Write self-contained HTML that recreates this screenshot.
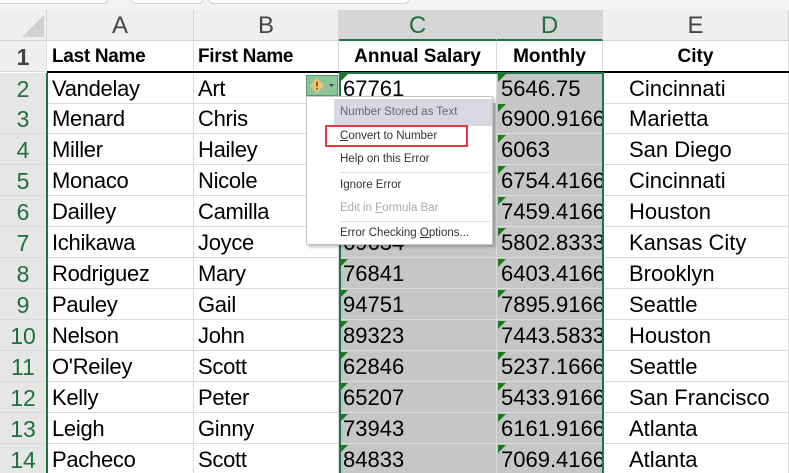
<!DOCTYPE html>
<html><head><meta charset="utf-8"><style>
*{margin:0;padding:0;box-sizing:border-box}
html,body{width:789px;height:473px;overflow:hidden}
body{background:#fff;position:relative;font-family:"Liberation Sans",sans-serif}
.top{position:absolute;left:0;top:0;width:789px;height:10px;background:#f3f3f3}
.tab{position:absolute;top:-6px;height:10px;border:1px solid #d0d0d0;border-radius:4px;background:#fff}
.hdr{position:absolute;top:10px;height:31px;background:#efefef;border-right:1px solid #d4d4d4;border-bottom:1px solid #d4d4d4;font-size:24px;color:#444;text-align:center;line-height:31px}
.hdr.sel{background:#d6d6d6;color:#1e6e3e;border-bottom:2px solid #217346}
.r{position:absolute;left:0;width:789px;height:31px}
.r div{position:absolute;top:0;height:31px;line-height:32px;font-size:22px;white-space:nowrap;overflow:hidden;border-right:1px solid #dadada;border-bottom:1px solid #dadada;color:#000}
.n{left:0;width:47px;background:#e6e6e6;text-align:center;color:#1e6e3e!important;font-size:23px!important}
.a{left:47px;width:147px;padding-left:5px;letter-spacing:-0.3px}
.b{left:194px;width:145px;padding-left:4px;letter-spacing:-0.3px}
.c{left:339px;width:158px;padding-left:4px;background:#c6c6c6}
.d{left:497px;width:106px;padding-left:4px;background:#c6c6c6}
.e{left:603px;width:186px;padding-left:26px}
.c::before,.d::before{content:"";position:absolute;left:1px;top:1px;border-top:8px solid #1a7a1a;border-right:8px solid transparent}
.h .c::before,.h .d::before{display:none}
.h div{font-weight:bold;font-size:19px}
.menu{position:absolute;left:306px;top:96px;width:187px;height:149px;background:#fff;border:1px solid #c6c6c6;box-shadow:2px 2px 3px rgba(0,0,0,.25);font-size:11.5px;color:#333}
.mi{position:absolute;left:33px;height:22px;line-height:22px}
.sep{position:absolute;left:33px;width:150px;height:1px;background:#e0e0e0}
</style></head><body>
<div class="top"><div class="tab" style="left:-10px;width:118px"></div><div class="tab" style="left:131px;width:72px"></div><div class="tab" style="left:209px;width:200px"></div></div>
<div class="hdr" style="left:0;width:47px"><svg width="47" height="31" style="position:absolute;left:0;top:0"><polygon points="22,27 44,27 44,5" fill="#d0d0d0"/></svg></div>
<div class="hdr" style="left:47px;width:147px">A</div>
<div class="hdr" style="left:194px;width:145px">B</div>
<div class="hdr sel" style="left:339px;width:158px">C</div>
<div class="hdr sel" style="left:497px;width:106px">D</div>
<div class="hdr" style="left:603px;width:186px">E</div>

<div class="r h" style="top:41px"><div class="n" style="background:#efefef;color:#444!important">1</div><div class="a">Last Name</div><div class="b">First Name</div><div class="c" style="background:#fff;text-align:center;padding:0">Annual Salary</div><div class="d" style="background:#fff;text-align:center;padding:0">Monthly</div><div class="e" style="text-align:center;padding:0">City</div></div>
<div style="position:absolute;left:47px;top:71px;width:742px;height:2px;background:#000"></div>

<div class="r" style="top:73px"><div class="n">2</div><div class="a">Vandelay</div><div class="b">Art</div><div class="c" style="background:#fff">67761</div><div class="d">5646.75</div><div class="e">Cincinnati</div></div>
<div class="r" style="top:103px"><div class="n">3</div><div class="a">Menard</div><div class="b">Chris</div><div class="c">75410</div><div class="d">6900.91667</div><div class="e">Marietta</div></div>
<div class="r" style="top:134px"><div class="n">4</div><div class="a">Miller</div><div class="b">Hailey</div><div class="c">72756</div><div class="d">6063</div><div class="e">San Diego</div></div>
<div class="r" style="top:165px"><div class="n">5</div><div class="a">Monaco</div><div class="b">Nicole</div><div class="c">81053</div><div class="d">6754.41667</div><div class="e">Cincinnati</div></div>
<div class="r" style="top:196px"><div class="n">6</div><div class="a">Dailley</div><div class="b">Camilla</div><div class="c">89513</div><div class="d">7459.41667</div><div class="e">Houston</div></div>
<div class="r" style="top:227px"><div class="n">7</div><div class="a">Ichikawa</div><div class="b">Joyce</div><div class="c">69634</div><div class="d">5802.83333</div><div class="e">Kansas City</div></div>
<div class="r" style="top:258px"><div class="n">8</div><div class="a">Rodriguez</div><div class="b">Mary</div><div class="c">76841</div><div class="d">6403.41667</div><div class="e">Brooklyn</div></div>
<div class="r" style="top:289px"><div class="n">9</div><div class="a">Pauley</div><div class="b">Gail</div><div class="c">94751</div><div class="d">7895.91667</div><div class="e">Seattle</div></div>
<div class="r" style="top:320px"><div class="n">10</div><div class="a">Nelson</div><div class="b">John</div><div class="c">89323</div><div class="d">7443.58333</div><div class="e">Houston</div></div>
<div class="r" style="top:351px"><div class="n">11</div><div class="a">O'Reiley</div><div class="b">Scott</div><div class="c">62846</div><div class="d">5237.16667</div><div class="e">Seattle</div></div>
<div class="r" style="top:382px"><div class="n">12</div><div class="a">Kelly</div><div class="b">Peter</div><div class="c">65207</div><div class="d">5433.91667</div><div class="e">San Francisco</div></div>
<div class="r" style="top:413px"><div class="n">13</div><div class="a">Leigh</div><div class="b">Ginny</div><div class="c">73943</div><div class="d">6161.91667</div><div class="e">Atlanta</div></div>
<div class="r" style="top:444px"><div class="n">14</div><div class="a">Pacheco</div><div class="b">Scott</div><div class="c">84833</div><div class="d">7069.41667</div><div class="e">Atlanta</div></div>

<div style="position:absolute;left:46px;top:73px;width:2px;height:400px;background:#217346"></div>
<div style="position:absolute;left:339px;top:72px;width:265px;height:410px;border:2px solid #217346"></div>

<div style="position:absolute;left:306px;top:75px;width:32px;height:21px;background:#8cc49c;border:1px solid #5a9a6a">
<svg width="30" height="19" style="position:absolute;left:0;top:0"><polygon points="10,2 17,9.5 10,17 3,9.5" fill="#f2c27a"/><rect x="9.2" y="5.5" width="1.6" height="5" fill="#7a4a00"/><rect x="9.2" y="12" width="1.6" height="1.6" fill="#7a4a00"/><polygon points="22,8 27,8 24.5,11" fill="#444"/></svg></div>

<div class="menu">
<div style="position:absolute;left:27px;top:2px;width:158px;height:27px;background:#d8d8e2"></div>
<div class="mi" style="top:4px;color:#666">Number Stored as Text</div>
<div style="position:absolute;left:18px;top:28px;width:143px;height:22px;border:2px solid #e8383d"></div>
<div class="mi" style="top:28px"><u>C</u>onvert to Number</div>
<div class="mi" style="top:51px">Help on this Error</div>
<div class="sep" style="top:75px"></div>
<div class="mi" style="top:77px">Ignore Error</div>
<div class="mi" style="top:100px;color:#aaa">Edit in <u>F</u>ormula Bar</div>
<div class="sep" style="top:124px"></div>
<div class="mi" style="top:125px">Error Checking <u>O</u>ptions...</div>
</div>
</body></html>
